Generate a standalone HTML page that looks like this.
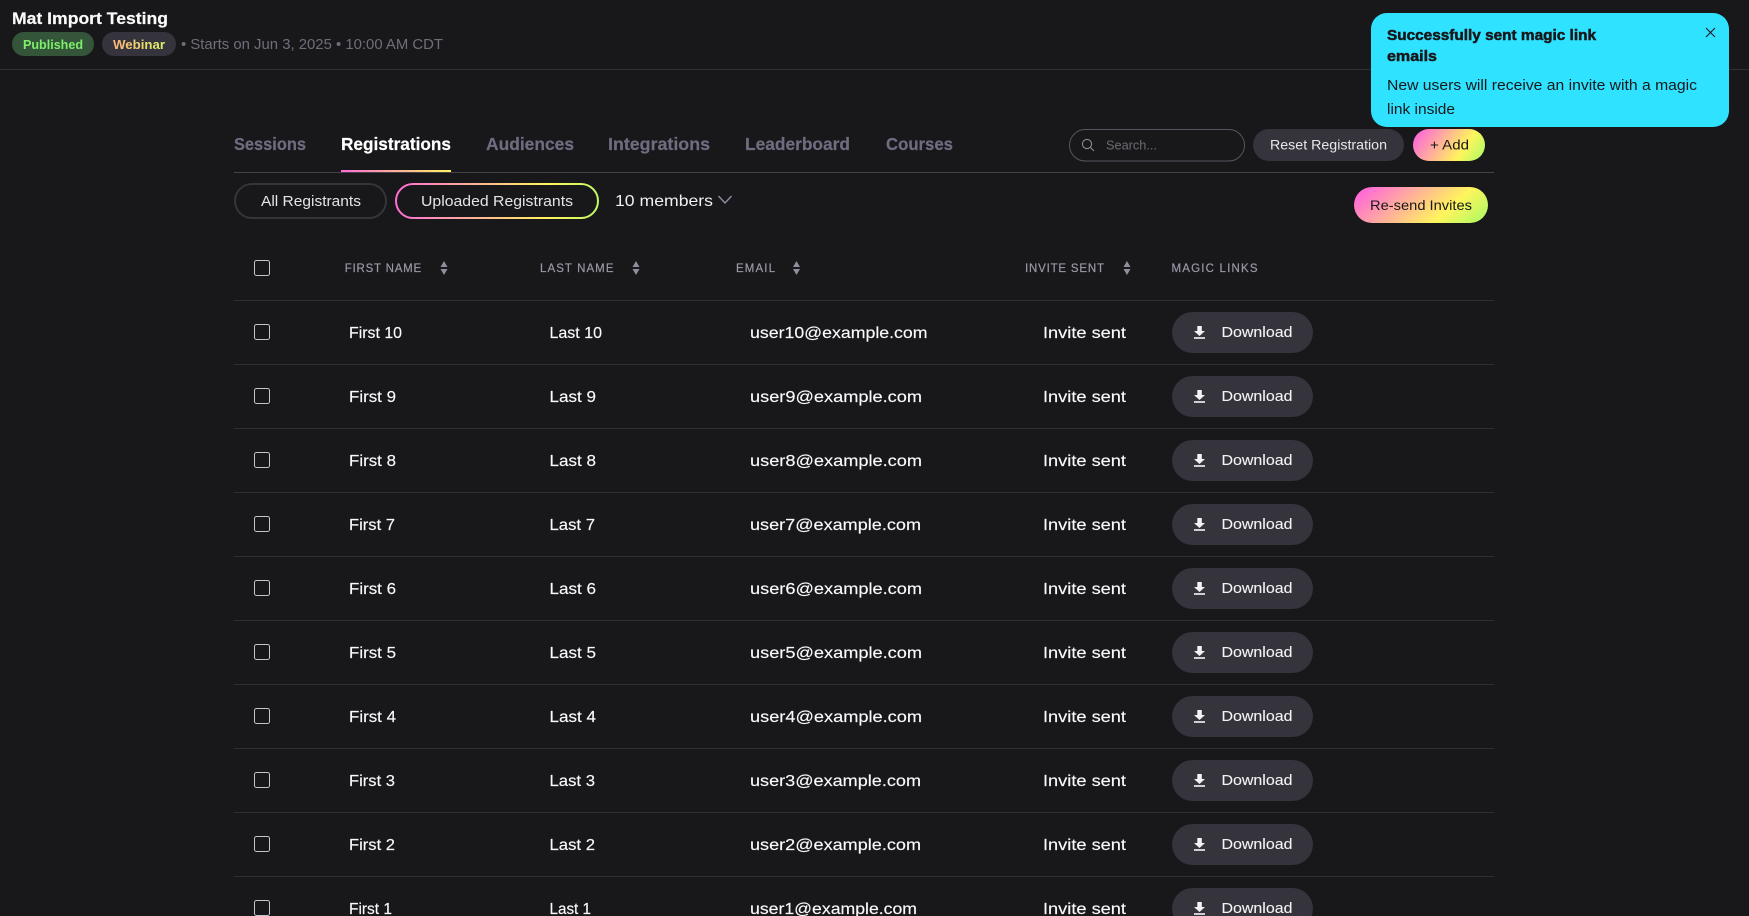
<!DOCTYPE html>
<html lang="en"><head><meta charset="utf-8"><title>Mat Import Testing</title>
<style>
html,body{margin:0;padding:0;background:#18181b;width:1749px;height:916px;overflow:hidden}
svg{display:block}
text{font-family:"Liberation Sans",Arial,sans-serif;white-space:pre}
.tab{font-size:17.5px;font-weight:700;fill:#6f6c80;stroke:#6f6c80;stroke-width:.2}
.hd{font-size:11.5px;fill:#9a98a6;stroke:#9a98a6;stroke-width:.2;letter-spacing:1px}
.c{font-size:16px;fill:#fafafa;stroke:#fafafa;stroke-width:.15}
.d{font-size:15px;fill:#f4f4f5;stroke:#f4f4f5;stroke-width:.1}
.ln{stroke:#2e2e33;stroke-width:1}
</style></head><body>
<svg xmlns="http://www.w3.org/2000/svg" width="1749" height="916" viewBox="0 0 1749 916">
<defs>
<linearGradient id="g" x1="0" y1="0.35" x2="1" y2="0.65"><stop offset="0" stop-color="#ff6bd6"/><stop offset="0.72" stop-color="#fff55c"/><stop offset="1" stop-color="#bdf962"/></linearGradient>
<linearGradient id="gb" gradientUnits="userSpaceOnUse" x1="395" y1="200" x2="599" y2="200"><stop offset="0" stop-color="#ff6bd6"/><stop offset="0.75" stop-color="#fff55c"/><stop offset="1" stop-color="#bdf962"/></linearGradient>
<linearGradient id="gu" gradientUnits="userSpaceOnUse" x1="341" y1="171" x2="451" y2="171"><stop offset="0" stop-color="#ff6bd6"/><stop offset="1" stop-color="#fff55c"/></linearGradient>
<linearGradient id="gw" gradientUnits="userSpaceOnUse" x1="113" y1="44" x2="165" y2="44"><stop offset="0" stop-color="#ffb27a"/><stop offset="1" stop-color="#d8f56a"/></linearGradient>
<g id="row">
<line class="ln" x1="234" y1="32.5" x2="1494" y2="32.5"/>
<rect x="254.5" y="-7.5" width="15" height="15" rx="2" fill="none" stroke="#c4c4cc" stroke-width="1"/>
<rect x="1172" y="-20" width="141" height="41" rx="20.5" fill="#35333b"/>
<path d="M1197.3-6h4.5v5h3.2l-5.5 5-5.5-5h3.3z" fill="#f4f4f5"/>
<rect x="1194" y="5.2" width="11" height="1.6" fill="#f4f4f5"/>
</g>
<g id="sort"><path d="M3.5 0L7 6H0zM0 8H7L3.5 14z" fill="#8f8d9e"/></g>
</defs>
<rect width="1749" height="916" fill="#18181b"/>

<!-- header -->
<text x="12" y="24" font-size="17" font-weight="700" fill="#fafafa" stroke="#fafafa" stroke-width=".2" textLength="156" lengthAdjust="spacingAndGlyphs">Mat Import Testing</text>
<rect x="12" y="32" width="82" height="24" rx="12" fill="#35553a"/>
<text x="23" y="49" font-size="13" font-weight="700" fill="#7df06b" textLength="60" lengthAdjust="spacingAndGlyphs">Published</text>
<rect x="102" y="32" width="74" height="24" rx="12" fill="#35333b"/>
<text x="113" y="49" font-size="13" font-weight="700" fill="url(#gw)" textLength="52" lengthAdjust="spacingAndGlyphs">Webinar</text>
<text x="181" y="49" font-size="14.5" fill="#6f6e7a" textLength="262" lengthAdjust="spacingAndGlyphs">• Starts on Jun 3, 2025 • 10:00 AM CDT</text>
<line class="ln" x1="0" y1="69.5" x2="1749" y2="69.5"/>

<!-- tabs -->
<text class="tab" x="234" y="150" textLength="72" lengthAdjust="spacingAndGlyphs">Sessions</text>
<text class="tab" x="341" y="150" style="fill:#fff;stroke:#fff" textLength="110" lengthAdjust="spacingAndGlyphs">Registrations</text>
<text class="tab" x="486" y="150" textLength="88" lengthAdjust="spacingAndGlyphs">Audiences</text>
<text class="tab" x="608" y="150" textLength="102" lengthAdjust="spacingAndGlyphs">Integrations</text>
<text class="tab" x="745" y="150" textLength="105" lengthAdjust="spacingAndGlyphs">Leaderboard</text>
<text class="tab" x="886" y="150" textLength="67" lengthAdjust="spacingAndGlyphs">Courses</text>
<line x1="234" y1="172.5" x2="1494" y2="172.5" stroke="#44434c" stroke-width="1"/>
<rect x="341" y="170" width="110" height="2" fill="url(#gu)"/>

<!-- search + actions -->
<rect x="1069.5" y="129.5" width="175" height="31.5" rx="15.7" fill="#18181b" stroke="#56555f"/>
<circle cx="1087" cy="144" r="4.6" fill="none" stroke="#8a8a93" stroke-width="1.1"/>
<line x1="1090.4" y1="147.4" x2="1094" y2="151" stroke="#8a8a93" stroke-width="1.1"/>
<text x="1106" y="149.5" font-size="13" fill="#6b6b73" textLength="51" lengthAdjust="spacingAndGlyphs">Search...</text>
<rect x="1253" y="129" width="151" height="32" rx="16" fill="#35333b"/>
<text x="1270" y="149.5" font-size="14" fill="#e8e8ea" textLength="117" lengthAdjust="spacingAndGlyphs">Reset Registration</text>
<rect x="1413" y="129" width="72" height="32" rx="16" fill="url(#g)"/>
<text x="1430" y="149.5" font-size="14" fill="#18181b" textLength="39" lengthAdjust="spacingAndGlyphs">+ Add</text>

<!-- filters -->
<rect x="235" y="184" width="151" height="34" rx="17" fill="none" stroke="#35343b" stroke-width="2"/>
<text x="261" y="206" font-size="14.5" fill="#e4e4e7" textLength="100" lengthAdjust="spacingAndGlyphs">All Registrants</text>
<rect x="396" y="184" width="202" height="34" rx="17" fill="none" stroke="url(#gb)" stroke-width="2"/>
<text x="421" y="206" font-size="14.5" fill="#e4e4e7" textLength="152" lengthAdjust="spacingAndGlyphs">Uploaded Registrants</text>
<text x="615" y="206" font-size="16" fill="#f0f0f2" textLength="98" lengthAdjust="spacingAndGlyphs">10 members</text>
<path d="M718.5 196l6.5 7 6.5-7" fill="none" stroke="#8f8d9e" stroke-width="1.4"/>
<rect x="1354" y="187" width="134" height="36" rx="18" fill="url(#g)"/>
<text x="1370" y="210" font-size="14" fill="#18181b" textLength="102" lengthAdjust="spacingAndGlyphs">Re-send Invites</text>

<!-- table head -->
<rect x="254.5" y="260.5" width="15" height="15" rx="2" fill="none" stroke="#c4c4cc"/>
<text class="hd" x="344.7" y="272" textLength="77.5" lengthAdjust="spacing">FIRST NAME</text>
<use href="#sort" x="440.5" y="261"/>
<text class="hd" x="540" y="272" textLength="74.5" lengthAdjust="spacing">LAST NAME</text>
<use href="#sort" x="632.5" y="261"/>
<text class="hd" x="736" y="272" textLength="40" lengthAdjust="spacing">EMAIL</text>
<use href="#sort" x="793" y="261"/>
<text class="hd" x="1025" y="272" textLength="80" lengthAdjust="spacing">INVITE SENT</text>
<use href="#sort" x="1123.5" y="261"/>
<text class="hd" x="1171.5" y="272" textLength="87" lengthAdjust="spacing">MAGIC LINKS</text>
<line class="ln" x1="234" y1="300.5" x2="1494" y2="300.5"/>

<!-- rows -->
<use href="#row" y="332"/>
<text class="c" x="349" y="338" textLength="53" lengthAdjust="spacingAndGlyphs">First 10</text>
<text class="c" x="549.5" y="338" textLength="52.5" lengthAdjust="spacingAndGlyphs">Last 10</text>
<text class="c" x="750" y="338" textLength="177.5" lengthAdjust="spacingAndGlyphs">user10@example.com</text>
<text class="c" x="1043" y="338" textLength="83" lengthAdjust="spacingAndGlyphs">Invite sent</text>
<text class="d" x="1221.5" y="337" textLength="71" lengthAdjust="spacingAndGlyphs">Download</text>

<use href="#row" y="396"/>
<text class="c" x="349" y="402" textLength="47" lengthAdjust="spacingAndGlyphs">First 9</text>
<text class="c" x="549.5" y="402" textLength="46.5" lengthAdjust="spacingAndGlyphs">Last 9</text>
<text class="c" x="750" y="402" textLength="172" lengthAdjust="spacingAndGlyphs">user9@example.com</text>
<text class="c" x="1043" y="402" textLength="83" lengthAdjust="spacingAndGlyphs">Invite sent</text>
<text class="d" x="1221.5" y="401" textLength="71" lengthAdjust="spacingAndGlyphs">Download</text>

<use href="#row" y="460"/>
<text class="c" x="349" y="466" textLength="47" lengthAdjust="spacingAndGlyphs">First 8</text>
<text class="c" x="549.5" y="466" textLength="46.5" lengthAdjust="spacingAndGlyphs">Last 8</text>
<text class="c" x="750" y="466" textLength="172" lengthAdjust="spacingAndGlyphs">user8@example.com</text>
<text class="c" x="1043" y="466" textLength="83" lengthAdjust="spacingAndGlyphs">Invite sent</text>
<text class="d" x="1221.5" y="465" textLength="71" lengthAdjust="spacingAndGlyphs">Download</text>

<use href="#row" y="524"/>
<text class="c" x="349" y="530" textLength="46" lengthAdjust="spacingAndGlyphs">First 7</text>
<text class="c" x="549.5" y="530" textLength="45.5" lengthAdjust="spacingAndGlyphs">Last 7</text>
<text class="c" x="750" y="530" textLength="171" lengthAdjust="spacingAndGlyphs">user7@example.com</text>
<text class="c" x="1043" y="530" textLength="83" lengthAdjust="spacingAndGlyphs">Invite sent</text>
<text class="d" x="1221.5" y="529" textLength="71" lengthAdjust="spacingAndGlyphs">Download</text>

<use href="#row" y="588"/>
<text class="c" x="349" y="594" textLength="47" lengthAdjust="spacingAndGlyphs">First 6</text>
<text class="c" x="549.5" y="594" textLength="46.5" lengthAdjust="spacingAndGlyphs">Last 6</text>
<text class="c" x="750" y="594" textLength="172" lengthAdjust="spacingAndGlyphs">user6@example.com</text>
<text class="c" x="1043" y="594" textLength="83" lengthAdjust="spacingAndGlyphs">Invite sent</text>
<text class="d" x="1221.5" y="593" textLength="71" lengthAdjust="spacingAndGlyphs">Download</text>

<use href="#row" y="652"/>
<text class="c" x="349" y="658" textLength="47" lengthAdjust="spacingAndGlyphs">First 5</text>
<text class="c" x="549.5" y="658" textLength="46.5" lengthAdjust="spacingAndGlyphs">Last 5</text>
<text class="c" x="750" y="658" textLength="172" lengthAdjust="spacingAndGlyphs">user5@example.com</text>
<text class="c" x="1043" y="658" textLength="83" lengthAdjust="spacingAndGlyphs">Invite sent</text>
<text class="d" x="1221.5" y="657" textLength="71" lengthAdjust="spacingAndGlyphs">Download</text>

<use href="#row" y="716"/>
<text class="c" x="349" y="722" textLength="47" lengthAdjust="spacingAndGlyphs">First 4</text>
<text class="c" x="549.5" y="722" textLength="46.5" lengthAdjust="spacingAndGlyphs">Last 4</text>
<text class="c" x="750" y="722" textLength="172" lengthAdjust="spacingAndGlyphs">user4@example.com</text>
<text class="c" x="1043" y="722" textLength="83" lengthAdjust="spacingAndGlyphs">Invite sent</text>
<text class="d" x="1221.5" y="721" textLength="71" lengthAdjust="spacingAndGlyphs">Download</text>

<use href="#row" y="780"/>
<text class="c" x="349" y="786" textLength="46" lengthAdjust="spacingAndGlyphs">First 3</text>
<text class="c" x="549.5" y="786" textLength="45.5" lengthAdjust="spacingAndGlyphs">Last 3</text>
<text class="c" x="750" y="786" textLength="171" lengthAdjust="spacingAndGlyphs">user3@example.com</text>
<text class="c" x="1043" y="786" textLength="83" lengthAdjust="spacingAndGlyphs">Invite sent</text>
<text class="d" x="1221.5" y="785" textLength="71" lengthAdjust="spacingAndGlyphs">Download</text>

<use href="#row" y="844"/>
<text class="c" x="349" y="850" textLength="46" lengthAdjust="spacingAndGlyphs">First 2</text>
<text class="c" x="549.5" y="850" textLength="45.5" lengthAdjust="spacingAndGlyphs">Last 2</text>
<text class="c" x="750" y="850" textLength="171" lengthAdjust="spacingAndGlyphs">user2@example.com</text>
<text class="c" x="1043" y="850" textLength="83" lengthAdjust="spacingAndGlyphs">Invite sent</text>
<text class="d" x="1221.5" y="849" textLength="71" lengthAdjust="spacingAndGlyphs">Download</text>

<use href="#row" y="908"/>
<text class="c" x="349" y="914" textLength="43" lengthAdjust="spacingAndGlyphs">First 1</text>
<text class="c" x="549.5" y="914" textLength="41.5" lengthAdjust="spacingAndGlyphs">Last 1</text>
<text class="c" x="750" y="914" textLength="167" lengthAdjust="spacingAndGlyphs">user1@example.com</text>
<text class="c" x="1043" y="914" textLength="83" lengthAdjust="spacingAndGlyphs">Invite sent</text>
<text class="d" x="1221.5" y="913" textLength="71" lengthAdjust="spacingAndGlyphs">Download</text>

<!-- toast -->
<rect x="1371" y="13" width="358" height="114" rx="16" fill="#2fe2ff"/>
<text x="1387" y="40" font-size="14.5" font-weight="700" fill="#18181b" textLength="209" lengthAdjust="spacingAndGlyphs" stroke="#18181b" stroke-width="0.5">Successfully sent magic link</text>
<text x="1387" y="61" font-size="14.5" font-weight="700" fill="#18181b" textLength="50" lengthAdjust="spacingAndGlyphs" stroke="#18181b" stroke-width="0.5">emails</text>
<text x="1387" y="90" font-size="14.5" fill="#18181b" textLength="310" lengthAdjust="spacingAndGlyphs">New users will receive an invite with a magic</text>
<text x="1387" y="114" font-size="14.5" fill="#18181b" textLength="68" lengthAdjust="spacingAndGlyphs">link inside</text>
<path d="M1706 28l9 9M1715 28l-9 9" fill="none" stroke="#18181b" stroke-width="1.1"/>
</svg>
</body></html>
